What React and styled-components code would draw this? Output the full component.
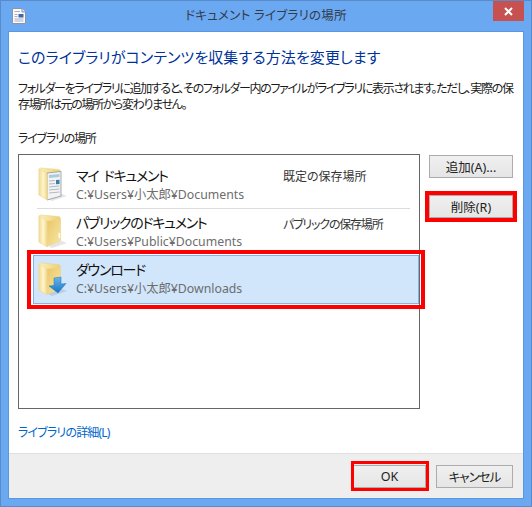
import React from 'react'
import styled, { createGlobalStyle } from 'styled-components'

const FONT = `"Noto Sans", "Noto Sans CJK JP", sans-serif`

const Global = createGlobalStyle`
  html, body { margin: 0; padding: 0; background: #6aa8f2; }
  body { font-family: ${FONT}; font-size: 12px; color: #1a1a1a; font-feature-settings: "palt"; }
  * { box-sizing: border-box; }
`

const FolderDefs = () => (
  <svg width="0" height="0" style={{ position: 'absolute' }}>
    <defs>
      <linearGradient id="folderBack" x1="0" y1="0" x2="1" y2="0">
        <stop offset="0" stopColor="#fdf0b8" />
        <stop offset="1" stopColor="#eccf77" />
      </linearGradient>
      <linearGradient id="folderFlap" x1="0" y1="0" x2="1" y2="0">
        <stop offset="0" stopColor="#f3db93" />
        <stop offset="0.5" stopColor="#fff5cd" />
        <stop offset="1" stopColor="#f0d382" />
      </linearGradient>
      <linearGradient id="folderInner" x1="0" y1="0" x2="1" y2="1">
        <stop offset="0" stopColor="#e9c768" />
        <stop offset="1" stopColor="#f8e6a4" />
      </linearGradient>
      <linearGradient id="arrowFill" x1="0" y1="0" x2="0" y2="1">
        <stop offset="0" stopColor="#6bb6ea" />
        <stop offset="1" stopColor="#1576c6" />
      </linearGradient>
    </defs>
  </svg>
)

const FolderIcon = ({ kind }) => (
  <svg width="30" height="36" viewBox="0 0 30 36">
    <path d="M8 31 L24 27 L29 29 L14 34 Z" fill="#000" opacity="0.1" />
    <path d="M1 2 Q1 1 3 1 L21 2.5 Q22.5 3 22.5 5 L22.5 27 L9 32 L1 28 Z" fill="url(#folderBack)" stroke="#e6d08c" strokeWidth="0.5" />
    {kind === 'doc' ? (
      <g>
        <path d="M9 6 L23 4.5 L23 29 L9 33 Z" fill="#f1f3f4" stroke="#8f9499" strokeWidth="0.8" />
        <path d="M11 8 L21.5 7 L21.5 10 L11 11 Z" fill="#a9cbdb" />
        <path d="M11 14 L17 13.5 M11 17 L17 16.5 M11 20 L21.5 19 M11 23 L21.5 22 M11 26 L21.5 25" stroke="#b4bbc1" strokeWidth="1" />
        <path d="M18 13 L21.5 12.7 L21.5 17 L18 17.3 Z" fill="#3b7fa8" />
      </g>
    ) : (
      <path d="M9 7 L22.5 5.5 L22.5 27 L9 32 Z" fill="url(#folderInner)" />
    )}
    <path d="M1 2 L9 6.5 L9.5 33 L1 28 Z" fill="url(#folderFlap)" stroke="#ecd693" strokeWidth="0.5" />
    {kind === 'plain' && <rect x="20.5" y="19" width="1.6" height="5" fill="#fff" opacity="0.9" />}
    {kind === 'download' && (
      <path
        d="M16 16 L23 15 L23 22 L28 21.5 L20 31 L11 24 L16 23.5 Z"
        fill="url(#arrowFill)"
        stroke="#1c74bb"
        strokeWidth="0.5"
      />
    )}
  </svg>
)

const DocumentIcon = () => (
  <svg width="14" height="16" viewBox="0 0 14 16">
    <path d="M0.5 0.5 H10 L13.5 4 V15.5 H0.5 Z" fill="#fbfbfd" stroke="#8d93a8" />
    <path d="M10 0.5 V4 H13.5" fill="#dfe3ee" stroke="#8d93a8" />
    <path d="M2.5 3.5 H8 M2.5 11 H11.5 M2.5 13 H11.5" stroke="#a9aec4" />
    <rect x="6.5" y="6" width="5" height="3.5" fill="#3e6aa8" />
    <path d="M2.5 6.5 H5.5 M2.5 8.5 H5.5" stroke="#a9aec4" />
  </svg>
)

const locations = [
  { name: 'マイ ドキュメント', path: 'C:¥Users¥小太郎¥Documents', note: '既定の保存場所', kind: 'doc', height: 48, iconTop: 7, textTop: 6, noteTop: 8, noteSpacing: 0 },
  { name: 'パブリックのドキュメント', path: 'C:¥Users¥Public¥Documents', note: 'パブリックの保存場所', kind: 'plain', height: 46, iconTop: 5, textTop: 4, noteTop: 7, noteSpacing: -1.2 },
  { name: 'ダウンロード', path: 'C:¥Users¥小太郎¥Downloads', note: '', kind: 'download', height: 49, iconTop: 7, textTop: 5, noteTop: 7, noteSpacing: 0, selected: true },
]

const App = () => (
  <Frame>
    <Global />
    <FolderDefs />
    <TitleBar>
      <TitleIcon><DocumentIcon /></TitleIcon>
      <Title>ドキュメント ライブラリの場所</Title>
      <CloseButton>
        <svg width="9" height="9" viewBox="0 0 9 9">
          <path d="M1 1 L8 8 M8 1 L1 8" stroke="#fff" strokeWidth="2" />
        </svg>
      </CloseButton>
    </TitleBar>
    <Client>
      <Body>
        <Heading>このライブラリがコンテンツを収集する方法を変更します</Heading>
        <Intro>
          フォルダーをライブラリに追加すると、そのフォルダー内のファイルがライブラリに表示されます。ただし、実際の保<br />
          存場所は元の場所から変わりません。
        </Intro>
        <SectionLabel>ライブラリの場所</SectionLabel>
        <Columns>
          <LocationList>
            {locations.map((loc, i) => (
              <React.Fragment key={loc.name}>
                <Row $selected={loc.selected} $height={loc.height}>
                  <RowIcon $top={loc.iconTop}><FolderIcon kind={loc.kind} /></RowIcon>
                  <RowText $top={loc.textTop}>
                    <RowName>{loc.name}</RowName>
                    <RowPath>{loc.path}</RowPath>
                  </RowText>
                  <RowNote $top={loc.noteTop} $spacing={loc.noteSpacing}>{loc.note}</RowNote>
                </Row>
                {i === 0 && <Separator />}
              </React.Fragment>
            ))}
          </LocationList>
          <SideButtons>
            <Button>追加(A)...</Button>
            <Button $marked>削除(R)</Button>
          </SideButtons>
        </Columns>
        <DetailLink>ライブラリの詳細(L)</DetailLink>
      </Body>
      <Footer>
        <OkButton $marked>OK</OkButton>
        <CancelButton>キャンセル</CancelButton>
      </Footer>
    </Client>
  </Frame>
)

const Frame = styled.div`
  width: 532px;
  height: 507px;
  display: flex;
  flex-direction: column;
  padding: 0 7px 7px;
  background: #6aa8f2;
  border: 1px solid #5a8bc9;
  overflow: hidden;
`
const TitleBar = styled.div`
  height: 30px;
  flex: none;
  display: flex;
  align-items: flex-start;
  position: relative;
`
const TitleIcon = styled.div`
  margin: 7px 0 0 4px;
  height: 16px;
`
const Title = styled.div`
  position: absolute;
  left: 0;
  right: 0;
  top: 5px;
  text-align: center;
  font-size: 12.5px;
  letter-spacing: 0.25px;
  line-height: 20px;
  color: #333c4a;
`
const CloseButton = styled.div`
  position: absolute;
  right: 0;
  top: 0;
  width: 31px;
  height: 20px;
  background: #c75050;
  display: flex;
  align-items: center;
  justify-content: center;
`
const Client = styled.div`
  flex: 1;
  display: flex;
  flex-direction: column;
  background: #fff;
  border: 1px solid #5b96e0;
`
const Body = styled.div`
  flex: 1;
  padding: 15px 4px 0 9px;
  display: flex;
  flex-direction: column;
`
const Heading = styled.div`
  font-size: 15px;
  letter-spacing: 0.1px;
  line-height: 20px;
  color: #003399;
`
const Intro = styled.div`
  margin-top: 14px;
  font-size: 12px;
  letter-spacing: -1.35px;
  line-height: 16px;
  white-space: nowrap;
`
const SectionLabel = styled.div`
  margin-top: 18px;
  font-size: 12px;
  letter-spacing: -1.2px;
  line-height: 16px;
  color: #222;
`
const Columns = styled.div`
  margin-top: 7px;
  display: flex;
  align-items: flex-start;
  gap: 9px;
`
const LocationList = styled.div`
  width: 402px;
  height: 255px;
  flex: none;
  border: 1px solid #666;
  padding: 5px 0 0 14px;
`
const Row = styled.div`
  height: ${(p) => p.$height}px;
  display: grid;
  grid-template-columns: 38px 207px 1fr;
  padding-left: 5px;
  position: relative;
  background: ${(p) => (p.$selected ? '#d1e6fb' : 'transparent')};
  box-shadow: ${(p) => (p.$selected ? 'inset 0 0 0 1px #7fb4e6' : 'none')};

  ${(p) => p.$selected && `
    &::after {
      content: '';
      position: absolute;
      inset: -5px -6px -5px -6px;
      border: 4px solid #f00;
      pointer-events: none;
    }
  `}
`
const RowIcon = styled.div`
  padding-top: ${(p) => p.$top}px;
`
const RowText = styled.div`
  padding-top: ${(p) => p.$top}px;
`
const RowName = styled.div`
  font-size: 14px;
  letter-spacing: -1.25px;
  word-spacing: 3px;
  line-height: 19px;
  color: #111;
  white-space: nowrap;
`
const RowPath = styled.div`
  font-size: 12.3px;
  line-height: 16px;
  margin-top: 2px;
  color: #6d6d6d;
  white-space: nowrap;
`
const RowNote = styled.div`
  padding-top: ${(p) => p.$top}px;
  font-size: 12px;
  letter-spacing: ${(p) => p.$spacing}px;
  line-height: 18px;
  color: #333;
`
const Separator = styled.div`
  height: 1px;
  margin: 0 9px 0 4px;
  background: #dcdcdc;
`
const SideButtons = styled.div`
  display: flex;
  flex-direction: column;
  gap: 17px;
  padding-top: 1px;
`
const Button = styled.div`
  width: 84px;
  height: 23px;
  position: relative;
  display: flex;
  align-items: center;
  justify-content: center;
  font-size: 12.5px;
  color: #222;
  border: 1px solid #acacac;
  background: linear-gradient(#f0f0f0, #e5e5e5);

  ${(p) => p.$marked && `
    &::after {
      content: '';
      position: absolute;
      inset: -5px;
      border: 4px solid #f00;
      pointer-events: none;
    }
  `}
`
const DetailLink = styled.div`
  margin-top: 16px;
  font-size: 12px;
  letter-spacing: -0.85px;
  line-height: 16px;
  color: #0066cc;
`
const Footer = styled.div`
  height: 45px;
  flex: none;
  display: flex;
  justify-content: flex-end;
  align-items: flex-start;
  gap: 10px;
  padding: 11px 10px 0 0;
  background: #eeeeee;
  border-top: 1px solid #dfdfdf;
`
const OkButton = styled(Button)`
  width: 73px;

  &::after {
    inset: -5px -4px -4px -3px;
    border-width: 3px;
  }
`
const CancelButton = styled(Button)`
  width: 77px;
  letter-spacing: -1px;
`

export default App
